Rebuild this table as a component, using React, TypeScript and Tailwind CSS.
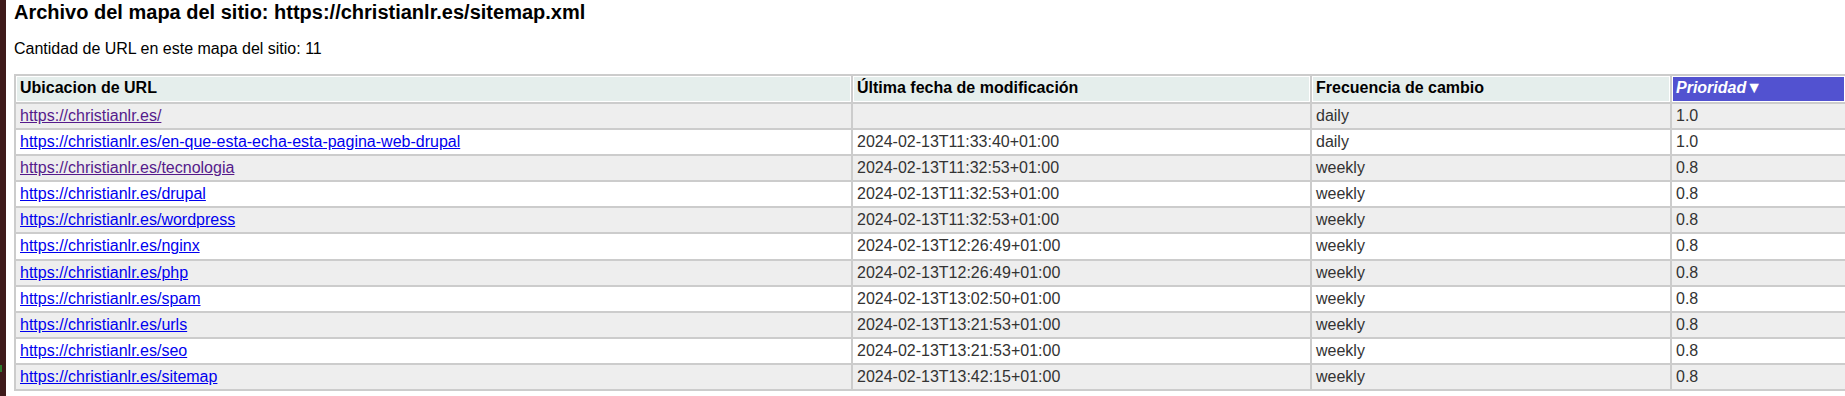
import clsx from 'clsx'

type Entry = {
  loc: string
  lastmod: string
  freq: string
  priority: string
  visited?: boolean
}

const entries: Entry[] = [
  {loc: 'https://christianlr.es/', lastmod: '', freq: 'daily', priority: '1.0', visited: true},
  {loc: 'https://christianlr.es/en-que-esta-echa-esta-pagina-web-drupal', lastmod: '2024-02-13T11:33:40+01:00', freq: 'daily', priority: '1.0'},
  {loc: 'https://christianlr.es/tecnologia', lastmod: '2024-02-13T11:32:53+01:00', freq: 'weekly', priority: '0.8', visited: true},
  {loc: 'https://christianlr.es/drupal', lastmod: '2024-02-13T11:32:53+01:00', freq: 'weekly', priority: '0.8'},
  {loc: 'https://christianlr.es/wordpress', lastmod: '2024-02-13T11:32:53+01:00', freq: 'weekly', priority: '0.8'},
  {loc: 'https://christianlr.es/nginx', lastmod: '2024-02-13T12:26:49+01:00', freq: 'weekly', priority: '0.8'},
  {loc: 'https://christianlr.es/php', lastmod: '2024-02-13T12:26:49+01:00', freq: 'weekly', priority: '0.8'},
  {loc: 'https://christianlr.es/spam', lastmod: '2024-02-13T13:02:50+01:00', freq: 'weekly', priority: '0.8'},
  {loc: 'https://christianlr.es/urls', lastmod: '2024-02-13T13:21:53+01:00', freq: 'weekly', priority: '0.8'},
  {loc: 'https://christianlr.es/seo', lastmod: '2024-02-13T13:21:53+01:00', freq: 'weekly', priority: '0.8'},
  {loc: 'https://christianlr.es/sitemap', lastmod: '2024-02-13T13:42:15+01:00', freq: 'weekly', priority: '0.8'},
]

const th = 'border border-white bg-[#e5eeec] px-[3px] pt-[2px] pb-[4px] text-left font-bold leading-[18px] text-black'
const td = 'px-[4px] py-[3px] leading-[18.1px] whitespace-nowrap overflow-hidden'

export default function App() {
  return (
    <div className="flex h-[396px] w-[1845px] overflow-hidden bg-white font-['Liberation_Sans',Arial,sans-serif] text-[16px]">
      {/* window edge behind the page */}
      <div className="flex w-[6px] flex-none flex-col bg-[#3e1a1a]">
        <div className="h-[365px]" />
        <div className="h-[7px] w-[2px] bg-[#2f7a2f]" />
      </div>

      <div className="ml-[8px] flex min-w-0 flex-1 flex-col">
        <h1 className="pt-[1px] text-[20px] font-bold leading-[23px] text-black">
          Archivo del mapa del sitio: https://christianlr.es/sitemap.xml
        </h1>
        <p className="mt-[15px] leading-[19px] text-black">
          Cantidad de URL en este mapa del sitio: 11
        </p>

        <div className="mt-[16px]">
          <table className="w-[1833px] table-fixed border-separate border-spacing-[2px] bg-[#cccccc]">
            <colgroup>
              <col className="w-[835px]" />
              <col className="w-[457px]" />
              <col className="w-[358px]" />
              <col className="w-[173px]" />
            </colgroup>
            <thead>
              <tr>
                <th className={th}>Ubicacion de URL</th>
                <th className={th}>Última fecha de modificación</th>
                <th className={th}>Frecuencia de cambio</th>
                <th className="border border-white bg-[#5252d0] px-[3px] pt-[2px] pb-[4px] text-left font-bold italic leading-[18px] text-white">
                  Prioridad▼
                </th>
              </tr>
            </thead>
            <tbody>
              {entries.map((entry, index) => (
                <tr
                  key={entry.loc}
                  className={clsx(
                    'text-[#333333]',
                    index % 2 === 0 ? 'bg-[#eeeeee]' : 'bg-white',
                  )}
                >
                  <td className={td}>
                    <a
                      href="#"
                      className={clsx(
                        'underline',
                        entry.visited ? 'text-[#551a8b]' : 'text-[#0000ee]',
                      )}
                    >
                      {entry.loc}
                    </a>
                  </td>
                  <td className={td}>{entry.lastmod}</td>
                  <td className={td}>{entry.freq}</td>
                  <td className={td}>{entry.priority}</td>
                </tr>
              ))}
            </tbody>
          </table>
        </div>
      </div>
    </div>
  )
}
